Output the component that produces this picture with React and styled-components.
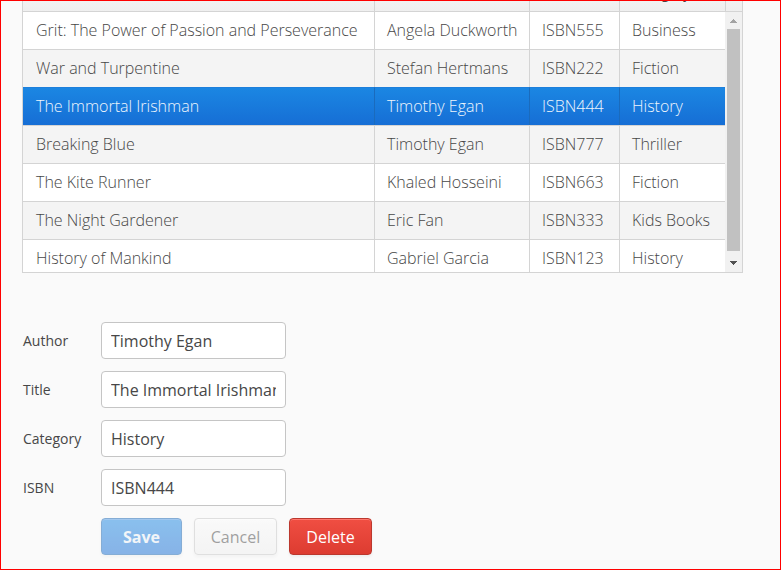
import { useState, useCallback } from 'react';
import styled, { createGlobalStyle } from 'styled-components';

const books = [
  { title: 'Grit: The Power of Passion and Perseverance', author: 'Angela Duckworth', isbn: 'ISBN555', category: 'Business' },
  { title: 'War and Turpentine', author: 'Stefan Hertmans', isbn: 'ISBN222', category: 'Fiction' },
  { title: 'The Immortal Irishman', author: 'Timothy Egan', isbn: 'ISBN444', category: 'History' },
  { title: 'Breaking Blue', author: 'Timothy Egan', isbn: 'ISBN777', category: 'Thriller' },
  { title: 'The Kite Runner', author: 'Khaled Hosseini', isbn: 'ISBN663', category: 'Fiction' },
  { title: 'The Night Gardener', author: 'Eric Fan', isbn: 'ISBN333', category: 'Kids Books' },
  { title: 'History of Mankind', author: 'Gabriel Garcia', isbn: 'ISBN123', category: 'History' }
];

const fields = [
  { name: 'author', label: 'Author' },
  { name: 'title', label: 'Title' },
  { name: 'category', label: 'Category' },
  { name: 'isbn', label: 'ISBN' }
];

export default function App() {
  const [book, setBook] = useState(books[2]);

  return (
    <Page>
      <GlobalStyle />
      <BookGrid selected={book.isbn} onSelect={setBook} />
      <BookForm key={book.isbn} book={book} />
    </Page>
  );
}

function BookGrid({ selected, onSelect }) {
  return (
    <GridFrame>
      <GridViewport>
        <Table>
          <colgroup>
            <Col />
            <Col $width={155} />
            <Col $width={90} />
            <Col $width={106} />
          </colgroup>
          <thead>
            <tr>
              <HeaderCell>Title</HeaderCell>
              <HeaderCell>Author</HeaderCell>
              <HeaderCell>ISBN</HeaderCell>
              <HeaderCell>Category</HeaderCell>
            </tr>
          </thead>
          <tbody>
            {books.map((item) => (
              <Row
                key={item.isbn}
                $selected={item.isbn === selected}
                onClick={() => onSelect(item)}
              >
                <Cell>{item.title}</Cell>
                <Cell>{item.author}</Cell>
                <Cell>{item.isbn}</Cell>
                <Cell>{item.category}</Cell>
              </Row>
            ))}
          </tbody>
        </Table>
      </GridViewport>
      <GridSide>
        <HeaderCorner />
        <ScrollTrack>
          <ScrollButton type="button" aria-label="Scroll up" disabled>
            <Arrow viewBox="0 0 7 4" shapeRendering="crispEdges">
              <path d="M3 0h1v1h1v1h1v1h1v1H0V3h1V2h1V1h1z" fill="#a3a3a3" />
            </Arrow>
          </ScrollButton>
          <ScrollThumb />
          <ScrollButton type="button" aria-label="Scroll down">
            <Arrow viewBox="0 0 7 4" shapeRendering="crispEdges">
              <path d="M0 0h7v1H6v1H5v1H4v1H3V3H2V2H1V1H0z" fill="#505050" />
            </Arrow>
          </ScrollButton>
        </ScrollTrack>
      </GridSide>
    </GridFrame>
  );
}

function BookForm({ book }) {
  const [values, setValues] = useState(book);

  const onChange = useCallback((e) => {
    const { name, value } = e.target;
    setValues((prev) => ({ ...prev, [name]: value }));
  }, []);

  const changed = fields.some(({ name }) => values[name] !== book[name]);

  return (
    <Form onSubmit={(e) => e.preventDefault()}>
      {fields.map(({ name, label }) => (
        <Field key={name}>
          <Label htmlFor={name}>{label}</Label>
          <Input
            id={name}
            name={name}
            value={values[name]}
            onChange={onChange}
          />
        </Field>
      ))}
      <Actions>
        <PrimaryButton type="submit" disabled={!changed}>
          Save
        </PrimaryButton>
        <Button
          type="button"
          disabled={!changed}
          onClick={() => setValues(book)}
        >
          Cancel
        </Button>
        <DangerButton type="button">Delete</DangerButton>
      </Actions>
    </Form>
  );
}

const GlobalStyle = createGlobalStyle`
  * {
    box-sizing: border-box;
  }

  body {
    margin: 0;
    background: #fafafa;
    color: #474747;
    font-family: 'Open Sans', sans-serif;
    font-size: 16px;
  }

  button,
  input {
    font: inherit;
  }
`;

/* Content is anchored to the bottom edge, the overflow is cut off at the top */
const Page = styled.main`
  display: flex;
  flex-direction: column;
  justify-content: flex-end;
  height: 100vh;
  padding: 0 37px 14px 21px;
  border: 1px solid #ff0000;
  overflow: hidden;
`;

const GridFrame = styled.section`
  flex: none;
  display: flex;
  border: 1px solid #d4d4d4;
`;

const GridViewport = styled.div`
  flex: 1;
  min-width: 0;
  height: 298px;
  overflow: hidden;
  background: #fff;
`;

const Table = styled.table`
  width: 100%;
  table-layout: fixed;
  border-collapse: separate;
  border-spacing: 0;
`;

const Col = styled.col`
  width: ${({ $width }) => ($width ? `${$width}px` : 'auto')};
`;

const HeaderCell = styled.th`
  height: 37px;
  padding: 0 12px;
  border-left: 1px solid #d4d4d4;
  background: linear-gradient(#fafafa, #efefef);
  font-size: 14px;
  font-weight: 400;
  text-align: left;
  white-space: nowrap;

  &:first-child {
    padding-left: 13px;
    border-left: 0;
  }
`;

const Cell = styled.td`
  height: 38px;
  padding: 0 0 0 12px;
  border-top: 1px solid #d4d4d4;
  border-left: 1px solid #d4d4d4;
  font-weight: 300;
  line-height: 37px;
  white-space: nowrap;
  overflow: hidden;

  &:first-child {
    padding-left: 13px;
    border-left: 0;
  }
`;

const Row = styled.tr`
  cursor: pointer;

  &:nth-child(even) {
    background: #f4f4f4;
  }

  ${({ $selected }) =>
    $selected &&
    `
    ${Cell} {
      border-top-color: #1d7fdb;
      border-left-color: #1a6bbd;
      background: linear-gradient(#1b87e3, #166ed5) border-box;
      color: #eef5fc;
    }
  `}
`;

const GridSide = styled.div`
  display: flex;
  flex-direction: column;
  width: 17px;
`;

const HeaderCorner = styled.div`
  height: 38px;
  border-left: 1px solid #d4d4d4;
  border-bottom: 1px solid #d4d4d4;
  background: linear-gradient(#fafafa, #efefef);
`;

const ScrollTrack = styled.div`
  flex: 1;
  display: flex;
  flex-direction: column;
  padding-bottom: 1px;
  background: #f1f1f1;
`;

const ScrollButton = styled.button`
  display: flex;
  align-items: center;
  justify-content: center;
  height: 17px;
  padding: 0;
  border: 0;
  background: transparent;
`;

const Arrow = styled.svg`
  width: 7px;
  height: 4px;
`;

const ScrollThumb = styled.div`
  flex: 1;
  margin: 0 2px 3px;
  background: #c1c1c1;
`;

const Form = styled.form`
  flex: none;
  display: flex;
  flex-direction: column;
  gap: 12px;
  margin-top: 49px;
`;

const Field = styled.div`
  display: flex;
  align-items: center;
`;

const Label = styled.label`
  width: 79px;
  padding-left: 1px;
  font-size: 14px;
`;

const Input = styled.input`
  width: 185px;
  height: 37px;
  padding: 0 9px;
  border: 1px solid #c5c5c5;
  border-radius: 4px;
  background: #fff;
  color: #474747;
`;

const Actions = styled.div`
  display: flex;
  gap: 12px;
  padding-left: 79px;
`;

const Button = styled.button`
  width: 83px;
  height: 37px;
  padding: 0;
  border: 1px solid #c5c5c5;
  border-radius: 4px;
  background: linear-gradient(#fafafa, #efefef);
  box-shadow: inset 0 1px 0 #fff, 0 2px 3px rgba(0, 0, 0, 0.05);
  color: #474747;
  cursor: pointer;

  &:disabled {
    opacity: 0.5;
    cursor: default;
  }
`;

const PrimaryButton = styled(Button)`
  width: 81px;
  border-color: #1362b1;
  background: linear-gradient(#1b87e3, #166ed5);
  box-shadow: inset 0 1px 0 #4d98e6, 0 2px 3px rgba(0, 0, 0, 0.05);
  color: #ecf2f8;
  font-weight: 700;
`;

const DangerButton = styled(Button)`
  border-color: #bb382e;
  background: linear-gradient(#f04e42, #dd3c31);
  box-shadow: inset 0 1px 0 #ff786f, 0 2px 3px rgba(0, 0, 0, 0.05);
  color: #fff;
`;
